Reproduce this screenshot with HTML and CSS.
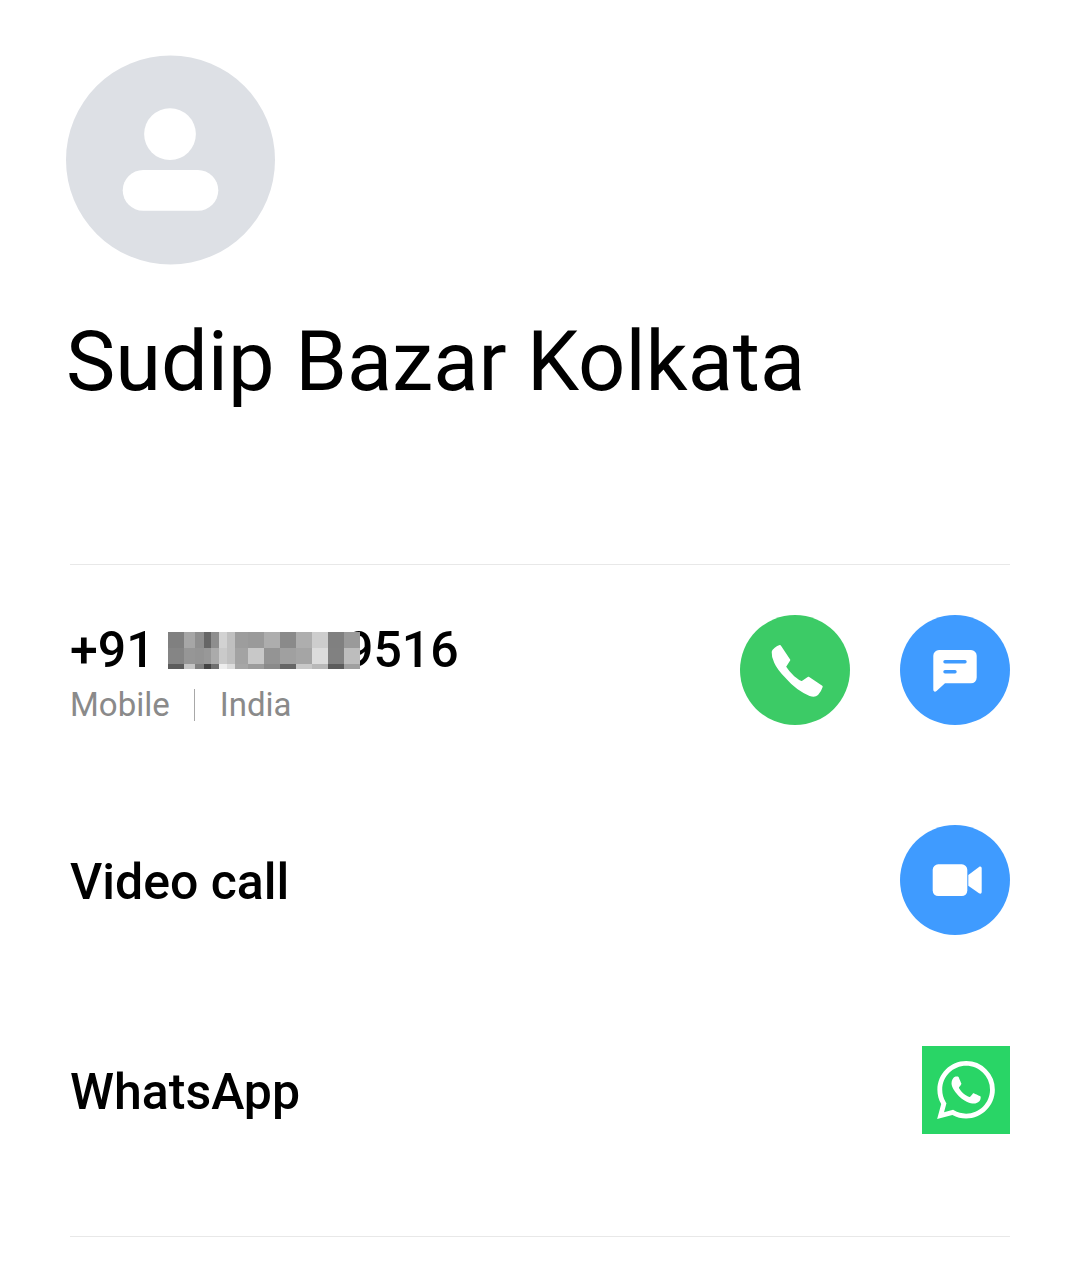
FILE: index.html
```html
<!DOCTYPE html>
<html lang="en">
<head>
  <meta charset="UTF-8">
  <meta name="viewport" content="width=device-width, initial-scale=1.0">
  <title>Sudip Bazar Kolkata</title>
  <link rel="stylesheet" href="styles.css">
</head>
<body>
  <div class="contact-page">
    <!-- header -->
    <div class="contact-header">
      <svg class="avatar" viewBox="0 0 210 210">
        <circle cx="105" cy="105" r="105" fill="#dde0e5"/>
        <circle cx="104.5" cy="79" r="26" fill="#fff"/>
        <rect x="57" y="115" width="96" height="41" rx="20.5" fill="#fff"/>
      </svg>
      <h1 class="contact-name">Sudip Bazar Kolkata</h1>
    </div>

    <!-- actions -->
    <div class="action-list">
      <div class="action-row">
        <div class="number-block">
          <div class="number">+91 <svg class="mosaic" width="192" height="37" viewBox="0 0 192 37" shape-rendering="crispEdges">
            <rect width="16" height="16" fill="#808080"/><rect x="16" width="11" height="16" fill="#a6a6a6"/><rect x="27" width="9" height="16" fill="#8f8f8f"/><rect x="36" width="7" height="16" fill="#666"/><rect x="43" width="8" height="16" fill="#8e8e8e"/><rect x="51" width="8" height="16" fill="#d2d2d2"/><rect x="59" width="8" height="16" fill="#c0c0c0"/><rect x="67" width="13" height="16" fill="#9d9d9d"/><rect x="80" width="16" height="16" fill="#9a9a9a"/><rect x="96" width="16" height="16" fill="#adadad"/><rect x="112" width="16" height="16" fill="#8a8a8a"/><rect x="128" width="16" height="16" fill="#aeaeae"/><rect x="144" width="16" height="16" fill="#cdcdcd"/><rect x="160" width="16" height="16" fill="#808080"/><rect x="176" width="16" height="16" fill="#9a9a9a"/>
            <rect y="16" width="16" height="16" fill="#858585"/><rect x="16" y="16" width="11" height="16" fill="#969696"/><rect x="27" y="16" width="9" height="16" fill="#949494"/><rect x="36" y="16" width="7" height="16" fill="#989898"/><rect x="43" y="16" width="8" height="16" fill="#ababab"/><rect x="51" y="16" width="8" height="16" fill="#cacaca"/><rect x="59" y="16" width="8" height="16" fill="#c0c0c0"/><rect x="67" y="16" width="13" height="16" fill="#a3a3a3"/><rect x="80" y="16" width="16" height="16" fill="#c8c8c8"/><rect x="96" y="16" width="16" height="16" fill="#949494"/><rect x="112" y="16" width="16" height="16" fill="#a0a0a0"/><rect x="128" y="16" width="16" height="16" fill="#a5a5a5"/><rect x="144" y="16" width="16" height="16" fill="#dcdcdc"/><rect x="160" y="16" width="16" height="16" fill="#818181"/><rect x="176" y="16" width="16" height="16" fill="#bdbdbd"/>
            <rect y="32" width="16" height="5" fill="#5c5c5c"/><rect x="16" y="32" width="11" height="5" fill="#c4c4c4"/><rect x="27" y="32" width="9" height="5" fill="#808080"/><rect x="36" y="32" width="7" height="5" fill="#444"/><rect x="43" y="32" width="8" height="5" fill="#707070"/><rect x="51" y="32" width="8" height="5" fill="#ededed"/><rect x="59" y="32" width="8" height="5" fill="#dcdcdc"/><rect x="67" y="32" width="13" height="5" fill="#a6a6a6"/><rect x="80" y="32" width="16" height="5" fill="#9c9c9c"/><rect x="96" y="32" width="16" height="5" fill="#8a8a8a"/><rect x="112" y="32" width="16" height="5" fill="#666"/><rect x="128" y="32" width="16" height="5" fill="#c8c8c8"/><rect x="144" y="32" width="16" height="5" fill="#b8b8b8"/><rect x="160" y="32" width="16" height="5" fill="#5c5c5c"/><rect x="176" y="32" width="16" height="5" fill="#a0a0a0"/>
          </svg><span class="number-tail">9516</span></div>
          <div class="number-meta">
            <span>Mobile</span>
            <span class="meta-sep"></span>
            <span>India</span>
          </div>
        </div>
        <div class="button-group">
          <div class="round-btn green">
            <svg viewBox="0 0 110 110">
              <path d="M40 31 C37 32 33 35 32.7 37 C32.5 41 33 43 35 47 C38 54 42 58 47 63 C53 70 61 76 70 80 C73 81 76 80.5 77.3 79.3 C79 77.5 81 74 81.7 71.7 L68.3 62.7 L61.7 67.3 C58 66 56 64 53.3 61.7 C50 58.5 47 55 45 51.7 L49.3 45 Z" fill="#fff" stroke="#fff" stroke-width="2" stroke-linejoin="round"/>
            </svg>
          </div>
          <div class="round-btn blue">
            <svg viewBox="0 0 110 110">
              <path d="M39 35 H71 A5.700 5.700 0 0 1 76.700 40.700 V62.600 A5.700 5.700 0 0 1 71 68.300 H45 L36.500 76 C35 77.300 33.300 76.500 33.300 74.500 V40.700 A5.700 5.700 0 0 1 39 35 Z" fill="#fff"/>
              <rect x="43.300" y="45" width="23.400" height="3.400" rx="1.700" fill="#3f9bff"/>
              <rect x="43.300" y="55" width="13.400" height="3.400" rx="1.700" fill="#3f9bff"/>
            </svg>
          </div>
        </div>
      </div>

      <div class="action-row">
        <div class="action-label">Video call</div>
        <div class="round-btn blue">
          <svg viewBox="0 0 110 110">
            <rect x="32.700" y="39.300" width="34.600" height="31.700" rx="5.500" fill="#fff"/>
            <path d="M68.300 50 L79 42 C80.500 41 81.700 41.700 81.700 43.500 V66.800 C81.700 68.600 80.500 69.300 79 68.300 L68.300 60.700 Z" fill="#fff"/>
          </svg>
        </div>
      </div>

      <div class="action-row">
        <div class="action-label">WhatsApp</div>
        <div class="wa-btn">
          <svg viewBox="0 0 24 24">
            <path fill="#fff" d="M17.472 14.382c-.297-.149-1.758-.867-2.03-.967-.273-.099-.471-.148-.67.15-.197.297-.767.966-.94 1.164-.173.199-.347.223-.644.075-.297-.15-1.255-.463-2.39-1.475-.883-.788-1.48-1.761-1.653-2.059-.173-.297-.018-.458.13-.606.134-.133.298-.347.446-.52.149-.174.198-.298.298-.497.099-.198.05-.371-.025-.52-.075-.149-.669-1.612-.916-2.207-.242-.579-.487-.5-.669-.51-.173-.008-.371-.01-.57-.01-.198 0-.52.074-.792.372-.272.297-1.04 1.016-1.04 2.479 0 1.462 1.065 2.875 1.213 3.074.149.198 2.096 3.2 5.077 4.487.709.306 1.262.489 1.694.625.712.227 1.36.195 1.871.118.571-.085 1.758-.719 2.006-1.413.248-.694.248-1.289.173-1.413-.074-.124-.272-.198-.57-.347m-5.421 7.403h-.004a9.87 9.87 0 01-5.031-1.378l-.361-.214-3.741.982.998-3.648-.235-.374a9.86 9.86 0 01-1.51-5.26c.001-5.45 4.436-9.884 9.888-9.884 2.64 0 5.122 1.03 6.988 2.898a9.825 9.825 0 012.893 6.994c-.003 5.45-4.437 9.884-9.885 9.884m8.413-18.297A11.815 11.815 0 0012.05 0C5.495 0 .16 5.335.157 11.892c0 2.096.547 4.142 1.588 5.945L.057 24l6.305-1.654a11.882 11.882 0 005.683 1.448h.005c6.554 0 11.89-5.335 11.893-11.893a11.821 11.821 0 00-3.48-8.413z"/>
          </svg>
        </div>
      </div>
    </div>
  </div>
</body>
</html>
```
FILE: styles.css
```css
body {
  font-family: Roboto, "Liberation Sans", sans-serif;
  margin: 0;
  background: #fff;
  color: #000;
}

.contact-page {
  width: 1080px;
  height: 1265px;
  padding: 0 70px;
  box-sizing: border-box;
  overflow: hidden;
}

.contact-header {
  height: 564px;
  padding-top: 55px;
  box-sizing: border-box;
}

.avatar {
  display: block;
  width: 209px;
  height: 210px;
  margin-left: -4px;
}

.contact-name {
  margin: 49px 0 0 -4px;
  font-size: 83px;
  font-weight: 400;
  line-height: 96px;
  white-space: nowrap;
}

.action-list {
  border-top: 1px solid #e8e8e8;
  border-bottom: 1px solid #e8e8e8;
  padding-bottom: 41px;
}

.action-row {
  display: flex;
  justify-content: space-between;
  align-items: center;
  height: 210px;
}

.number-block {
  margin-top: 6px;
}

.number {
  display: flex;
  align-items: center;
  font-size: 50px;
  font-weight: 500;
  line-height: 56px;
  white-space: pre;
}

.mosaic {
  position: relative;
  z-index: 1;
  margin-left: 1px;
  margin-right: -15px;
}

.number-meta {
  display: flex;
  align-items: center;
  gap: 24.5px;
  margin-top: 8px;
  font-size: 33px;
  line-height: 38px;
  color: #8a8a8a;
}

.meta-sep {
  width: 1px;
  height: 32px;
  background: #a8a8a8;
}

.button-group {
  display: flex;
  gap: 50px;
}

.round-btn {
  width: 110px;
  height: 110px;
  border-radius: 50%;
}

.round-btn svg {
  display: block;
  width: 110px;
  height: 110px;
}

.round-btn.green {
  background: #3ccb66;
}

.round-btn.blue {
  background: #3f9bff;
}

.action-label {
  margin-top: 4px;
  font-size: 50px;
  font-weight: 500;
  line-height: 56px;
}

.wa-btn {
  display: flex;
  align-items: center;
  justify-content: center;
  width: 88px;
  height: 88px;
  background: #29d566;
}

.wa-btn svg {
  width: 58px;
  height: 58px;
}
```
